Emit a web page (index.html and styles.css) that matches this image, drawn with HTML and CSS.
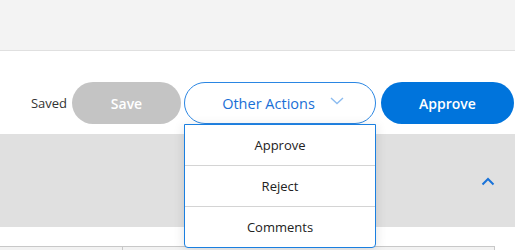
FILE: index.html
```html
<!DOCTYPE html>
<html>
<head>
<meta charset="utf-8">
<link rel="stylesheet" href="styles.css">
</head>
<body>
<div class="topbar"></div>
<div class="actions">
  <span class="saved">Saved</span>
  <button class="btn btn-save">Save</button>
  <div class="other-wrap">
    <button class="btn btn-other">Other Actions
      <svg class="chev-down" width="14" height="8" viewBox="0 0 14 8"><path d="M1 1 L7 6.5 L13 1" fill="none" stroke="#8cbcf0" stroke-width="1.4"/></svg>
    </button>
    <div class="menu">
      <div class="menu-item">Approve</div>
      <div class="menu-item">Reject</div>
      <div class="menu-item">Comments</div>
    </div>
  </div>
  <button class="btn btn-approve">Approve</button>
</div>
<div class="section">
  <svg class="chev-up" width="14" height="9" viewBox="0 0 14 9"><path d="M1.5 7.5 L7 2 L12.5 7.5" fill="none" stroke="#1a73d9" stroke-width="2"/></svg>
</div>
<div class="gap"></div>
<div class="table">
  <div class="cell first"></div>
  <div class="cell"></div>
</div>
</body>
</html>
```

FILE: styles.css
```css
html, body {
  margin: 0;
  padding: 0;
  background: #fff;
  font-family: "Open Sans", "Noto Sans", sans-serif;
  overflow: hidden;
}
.topbar {
  height: 50px;
  background: #f3f3f3;
  border-bottom: 1px solid #e0e0e0;
}
.actions {
  height: 83px;
  box-sizing: border-box;
  padding-top: 31px;
  display: flex;
  align-items: flex-start;
  justify-content: flex-end;
  padding-right: 1px;
}
.saved {
  font-size: 13px;
  color: #333;
  line-height: 42px;
  margin-right: 5px;
}
.btn {
  height: 42px;
  border-radius: 21px;
  font-family: "Open Sans", "Noto Sans", sans-serif;
  font-size: 14px;
  border: none;
  padding: 0;
  cursor: pointer;
}
.btn-save {
  width: 109px;
  background: #c4c4c4;
  color: #fff;
  font-weight: 600;
  margin-right: 3px;
}
.other-wrap {
  position: relative;
  margin-right: 5px;
}
.btn-other {
  width: 192px;
  background: #fff;
  border: 1px solid #2a86e3;
  color: #1a6fd6;
  font-size: 14.5px;
  display: flex;
  align-items: center;
  justify-content: center;
  padding-left: 6px;
  box-sizing: border-box;
}
.chev-down {
  margin-left: 15px;
  margin-top: -4px;
}
.btn-approve {
  width: 133px;
  background: #0074dc;
  color: #fff;
  font-weight: 600;
}
.menu {
  position: absolute;
  top: 42px;
  left: 0;
  width: 192px;
  box-sizing: border-box;
  background: #fff;
  border: 1px solid #1a7fe0;
  border-radius: 0 0 4px 4px;
  box-shadow: 0 2px 12px rgba(0, 0, 0, 0.12);
  z-index: 5;
}
.menu-item {
  height: 41px;
  box-sizing: border-box;
  border-bottom: 1px solid #d4d4d4;
  font-size: 13px;
  color: #222;
  display: flex;
  align-items: center;
  justify-content: center;
}
.menu-item:last-child {
  border-bottom: none;
  height: 40px;
}
.section {
  height: 93px;
  background: #e0e0e0;
  display: flex;
  justify-content: flex-end;
  align-items: flex-start;
  padding-right: 20px;
}
.chev-up {
  margin-top: 43px;
}
.gap {
  height: 19px;
}
.table {
  display: flex;
  margin-right: 20px;
  border-top: 1px solid #c8c8c8;
  border-right: 1px solid #c8c8c8;
  height: 10px;
  background: #f2f2f2;
}
.cell {
  flex: 1;
}
.cell.first {
  flex: 0 0 122px;
  border-right: 1px solid #c8c8c8;
}
```
